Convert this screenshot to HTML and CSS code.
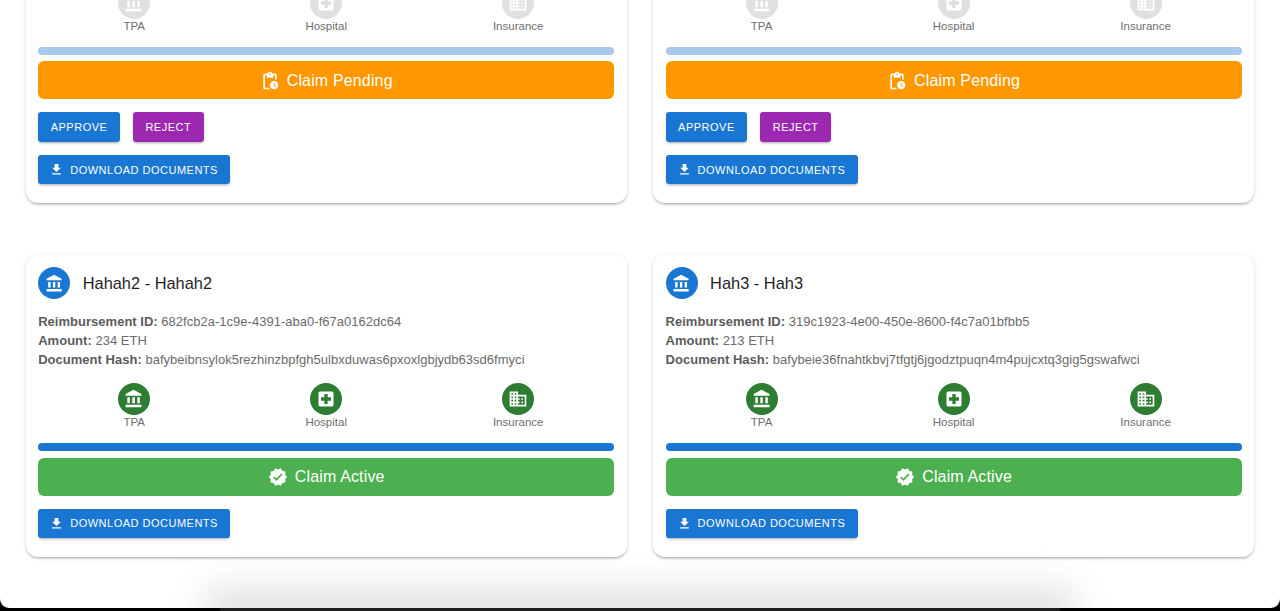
FILE: index.html
```html
<!DOCTYPE html>
<html lang="en">
<head>
  <meta charset="UTF-8" />
  <meta name="viewport" content="width=device-width, initial-scale=1.0"/>
  <title>Claims</title>
  <link rel="stylesheet" href="styles.css">
</head>
<body>
  <svg class="icon-defs" aria-hidden="true">
    <symbol id="i-bank" viewBox="0 0 24 24"><path d="M4 10v7h3v-7H4zm6 0v7h3v-7h-3zM2 22h19v-3H2v3zm14-12v7h3v-7h-3zm-4.500-9L2 6v2h19V6l-9.500-5z"/></symbol>
    <symbol id="i-hospital" viewBox="0 0 24 24"><path d="M19 3H5c-1.100 0-1.990.9-1.990 2L3 19c0 1.100.9 2 2 2h14c1.100 0 2-.9 2-2V5c0-1.100-.9-2-2-2zm-1 11h-4v4h-4v-4H6v-4h4V6h4v4h4v4z"/></symbol>
    <symbol id="i-business" viewBox="0 0 24 24"><path d="M12 7V3H2v18h20V7H12zM6 19H4v-2h2v2zm0-4H4v-2h2v2zm0-4H4V9h2v2zm0-4H4V5h2v2zm4 12H8v-2h2v2zm0-4H8v-2h2v2zm0-4H8V9h2v2zm0-4H8V5h2v2zm10 12h-8v-2h2v-2h-2v-2h2v-2h-2V9h8v10zm-2-8h-2v2h2v-2zm0 4h-2v2h2v-2z"/></symbol>
    <symbol id="i-download" viewBox="0 0 24 24"><path d="M5 20h14v-2H5v2zM19 9h-4V3H9v6H5l7 7 7-7z"/></symbol>
    <symbol id="i-verified" viewBox="0 0 24 24"><path d="M23 12l-2.440-2.790.34-3.690-3.610-.82-1.890-3.200L12 2.960 8.600 1.500 6.710 4.690 3.100 5.500l.34 3.700L1 12l2.440 2.790-.34 3.700 3.610.82L8.600 22.500l3.400-1.470 3.400 1.460 1.890-3.190 3.610-.82-.34-3.690L23 12zm-12.910 4.720l-3.800-3.810 1.480-1.480 2.320 2.330 5.850-5.870 1.480 1.480-7.330 7.350z"/></symbol>
    <symbol id="i-pending" viewBox="0 0 24 24"><path d="M17 12c-2.760 0-5 2.240-5 5s2.240 5 5 5 5-2.240 5-5-2.240-5-5-5zm1.650 7.350L16.500 17.200V14h1v2.790l1.850 1.850-.7.71zM18 3h-3.180C14.400 1.840 13.300 1 12 1s-2.400.84-2.820 2H6c-1.100 0-2 .9-2 2v15c0 1.100.9 2 2 2h6.110c-.59-.57-1.070-1.250-1.420-2H6V5h2v3h8V5h2v5.080c.71.1 1.380.31 2 .6V5c0-1.100-.9-2-2-2zm-6 2c-.55 0-1-.45-1-1s.45-1 1-1 1 .45 1 1-.45 1-1 1z"/></symbol>
  </svg>

  <div class="window">
    <div class="claim-grid">

      <div class="claim-card scrolled">
        <div class="steps">
          <div class="step"><div class="step-circle idle"><svg><use href="#i-bank"/></svg></div><span>TPA</span></div>
          <div class="step"><div class="step-circle idle"><svg><use href="#i-hospital"/></svg></div><span>Hospital</span></div>
          <div class="step"><div class="step-circle idle"><svg><use href="#i-business"/></svg></div><span>Insurance</span></div>
        </div>
        <div class="progress light"></div>
        <div class="status pending"><svg><use href="#i-pending"/></svg>Claim Pending</div>
        <div class="actions">
          <button class="btn blue">Approve</button>
          <button class="btn purple">Reject</button>
        </div>
        <button class="btn blue download"><svg><use href="#i-download"/></svg>Download Documents</button>
      </div>

      <div class="claim-card scrolled">
        <div class="steps">
          <div class="step"><div class="step-circle idle"><svg><use href="#i-bank"/></svg></div><span>TPA</span></div>
          <div class="step"><div class="step-circle idle"><svg><use href="#i-hospital"/></svg></div><span>Hospital</span></div>
          <div class="step"><div class="step-circle idle"><svg><use href="#i-business"/></svg></div><span>Insurance</span></div>
        </div>
        <div class="progress light"></div>
        <div class="status pending"><svg><use href="#i-pending"/></svg>Claim Pending</div>
        <div class="actions">
          <button class="btn blue">Approve</button>
          <button class="btn purple">Reject</button>
        </div>
        <button class="btn blue download"><svg><use href="#i-download"/></svg>Download Documents</button>
      </div>

      <div class="claim-card">
        <div class="card-header">
          <div class="avatar"><svg><use href="#i-bank"/></svg></div>
          <h2>Hahah2 - Hahah2</h2>
        </div>
        <div class="details">
          <p><strong>Reimbursement ID:</strong> 682fcb2a-1c9e-4391-aba0-f67a0162dc64</p>
          <p><strong>Amount:</strong> 234 ETH</p>
          <p><strong>Document Hash:</strong> bafybeibnsylok5rezhinzbpfgh5ulbxduwas6pxoxlgbjydb63sd6fmyci</p>
        </div>
        <div class="steps">
          <div class="step"><div class="step-circle done"><svg><use href="#i-bank"/></svg></div><span>TPA</span></div>
          <div class="step"><div class="step-circle done"><svg><use href="#i-hospital"/></svg></div><span>Hospital</span></div>
          <div class="step"><div class="step-circle done"><svg><use href="#i-business"/></svg></div><span>Insurance</span></div>
        </div>
        <div class="progress"></div>
        <div class="status active"><svg><use href="#i-verified"/></svg>Claim Active</div>
        <button class="btn blue download"><svg><use href="#i-download"/></svg>Download Documents</button>
      </div>

      <div class="claim-card">
        <div class="card-header">
          <div class="avatar"><svg><use href="#i-bank"/></svg></div>
          <h2>Hah3 - Hah3</h2>
        </div>
        <div class="details">
          <p><strong>Reimbursement ID:</strong> 319c1923-4e00-450e-8600-f4c7a01bfbb5</p>
          <p><strong>Amount:</strong> 213 ETH</p>
          <p><strong>Document Hash:</strong> bafybeie36fnahtkbvj7tfgtj6jgodztpuqn4m4pujcxtq3gig5gswafwci</p>
        </div>
        <div class="steps">
          <div class="step"><div class="step-circle done"><svg><use href="#i-bank"/></svg></div><span>TPA</span></div>
          <div class="step"><div class="step-circle done"><svg><use href="#i-hospital"/></svg></div><span>Hospital</span></div>
          <div class="step"><div class="step-circle done"><svg><use href="#i-business"/></svg></div><span>Insurance</span></div>
        </div>
        <div class="progress"></div>
        <div class="status active"><svg><use href="#i-verified"/></svg>Claim Active</div>
        <button class="btn blue download"><svg><use href="#i-download"/></svg>Download Documents</button>
      </div>

    </div>
    <div class="dock-shadow"></div>
  </div>
</body>
</html>
```

FILE: styles.css
```css
* {
  margin: 0;
  padding: 0;
  box-sizing: border-box;
  font-family: "Liberation Sans", Arial, sans-serif;
}

body {
  background: linear-gradient(90deg, #000 220px, #1e1e1e 220px, #1e1e1e 1060px, #000 1060px);
  height: 611px;
  overflow: hidden;
}

.icon-defs {
  display: none;
}

svg {
  fill: currentColor;
  display: block;
  flex-shrink: 0;
}

.window {
  position: relative;
  height: 608px;
  background: #fff;
  border-radius: 0 0 9px 9px;
  overflow: hidden;
}

.claim-grid {
  display: grid;
  grid-template-columns: 601px 601px;
  column-gap: 26.4px;
  row-gap: 52px;
  padding: 0 25.6px;
  margin-top: -13.5px;
}

.claim-card {
  background: #fff;
  border-radius: 12px;
  padding: 12px 12.4px 19px 12.6px;
  box-shadow: 0 2px 3px -1px rgba(0, 0, 0, 0.35), 0 0 6px rgba(0, 0, 0, 0.07);
}

/* first row is scrolled past the top of the window */
.claim-card.scrolled {
  padding-top: 0;
  border-radius: 0 0 12px 12px;
}

.card-header {
  display: flex;
  align-items: center;
  gap: 12.5px;
  margin-bottom: 12.4px;
}

.avatar {
  width: 32px;
  height: 32px;
  border-radius: 50%;
  background: #1976d2;
  color: #fff;
  display: flex;
  align-items: center;
  justify-content: center;
}

.avatar svg {
  width: 19px;
  height: 19px;
}

.card-header h2 {
  font-size: 16.4px;
  font-weight: 400;
  color: #1f1f1f;
}

.details {
  font-size: 13px;
  line-height: 19.2px;
  letter-spacing: 0.02px;
  color: #6b6b6b;
}

.details strong {
  color: #5c5c5c;
}

.steps {
  display: grid;
  grid-template-columns: repeat(3, 1fr);
  margin-top: 13.5px;
}

.scrolled .steps {
  margin-top: 0;
}

.step {
  display: flex;
  flex-direction: column;
  align-items: center;
  font-size: 11.5px;
  line-height: 14px;
  color: #6e6e6e;
}

.step-circle {
  width: 32px;
  height: 32px;
  border-radius: 50%;
  color: #fff;
  display: flex;
  align-items: center;
  justify-content: center;
}

.step-circle svg {
  width: 20px;
  height: 20px;
}

.step-circle.idle { background: #e0e0e0; }
.step-circle.done { background: #2e7d32; }

.progress {
  height: 8px;
  margin-top: 14px;
  border-radius: 4px;
  background: #1976d2;
}

.progress.light {
  background: #a9c9ec;
}

.status {
  height: 38px;
  margin-top: 6.8px;
  padding-top: 0.6px;
  border-radius: 6px;
  color: #fff;
  font-size: 16px;
  letter-spacing: 0.15px;
  display: flex;
  align-items: center;
  justify-content: center;
  gap: 7px;
}

.status svg {
  width: 20px;
  height: 20px;
}

.status.pending { background: #ff9800; }
.status.active { background: #4caf50; }

.actions {
  display: flex;
  gap: 13px;
  margin-top: 13px;
}

.btn {
  display: flex;
  align-items: center;
  height: 29.5px;
  padding: 0 12.5px;
  border: none;
  border-radius: 3px;
  color: #fff;
  font-size: 11px;
  letter-spacing: 0.5px;
  text-transform: uppercase;
  box-shadow: 0 2px 3px -1px rgba(0, 0, 0, 0.35);
}

.btn.blue { background: #1976d2; }
.btn.purple { background: #9c27b0; }

.download {
  margin-top: 13px;
  padding-left: 11px;
  gap: 6px;
}

.download svg {
  width: 15px;
  height: 15px;
}

.dock-shadow {
  position: absolute;
  left: 205px;
  right: 205px;
  bottom: -22px;
  height: 40px;
  background: #dedede;
  filter: blur(18px);
}
```
